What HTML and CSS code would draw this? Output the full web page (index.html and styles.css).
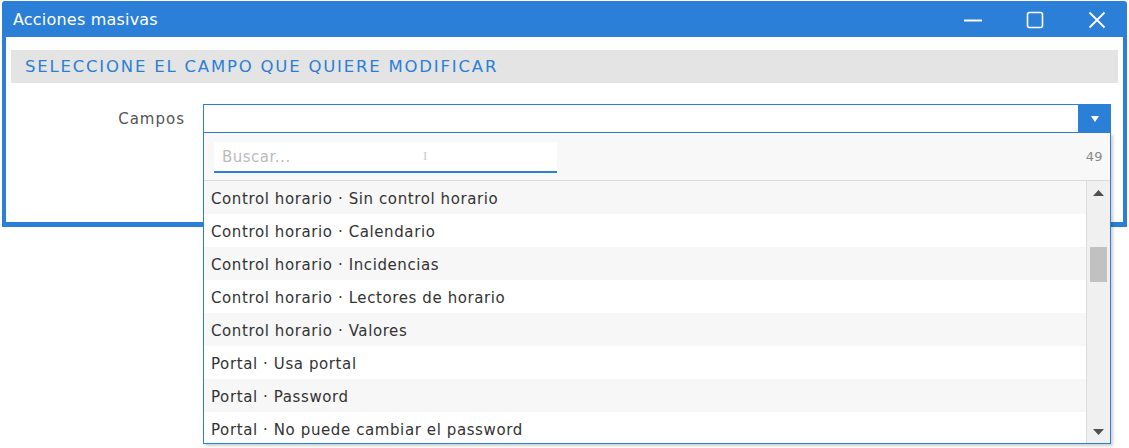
FILE: index.html
```html
<!DOCTYPE html>
<html lang="es">
<head>
<meta charset="utf-8">
<title>Acciones masivas</title>
<link rel="stylesheet" href="styles.css">
</head>
<body>
<div class="window">
  <div class="titlebar">
    <span class="title">Acciones masivas</span>
    <div class="controls">
      <svg class="ctl" width="20" height="20" viewBox="0 0 20 20"><path d="M1 10.5h18" stroke="#fff" stroke-width="2"/></svg>
      <svg class="ctl" width="20" height="20" viewBox="0 0 20 20"><rect x="2.5" y="2.5" width="15" height="15" rx="2" fill="none" stroke="#fff" stroke-width="1.6"/></svg>
      <svg class="ctl" width="20" height="20" viewBox="0 0 20 20"><path d="M2.5 2.5l15 15M17.5 2.5l-15 15" stroke="#fff" stroke-width="1.8"/></svg>
    </div>
  </div>
  <div class="body">
    <div class="section">SELECCIONE EL CAMPO QUE QUIERE MODIFICAR</div>
    <div class="field">
      <label class="label">Campos</label>
      <div class="select">
        <div class="select-box">
          <div class="select-value"></div>
          <div class="select-btn"><svg width="10" height="8" viewBox="0 0 10 8"><path d="M1 1h8L5 7z" fill="#fff"/></svg></div>
        </div>
        <div class="dropdown">
          <div class="search-row">
            <div class="search"><span class="placeholder">Buscar...</span><span class="cursor">I</span></div>
            <span class="count">49</span>
          </div>
          <div class="list-wrap">
            <ul class="list">
              <li class="alt">Control horario · Sin control horario</li>
              <li>Control horario · Calendario</li>
              <li class="alt">Control horario · Incidencias</li>
              <li>Control horario · Lectores de horario</li>
              <li class="alt">Control horario · Valores</li>
              <li>Portal · Usa portal</li>
              <li class="alt">Portal · Password</li>
              <li>Portal · No puede cambiar el password</li>
            </ul>
            <div class="scrollbar">
              <svg class="arrow" width="11" height="6" viewBox="0 0 11 6"><path d="M0 6h11L5.5 0z" fill="#505050"/></svg>
              <div class="track"><div class="thumb"></div></div>
              <svg class="arrow" width="11" height="6" viewBox="0 0 11 6"><path d="M0 0h11L5.5 6z" fill="#505050"/></svg>
            </div>
          </div>
        </div>
      </div>
    </div>
  </div>
</div>
</body>
</html>
```
FILE: styles.css
```css
* { box-sizing: border-box; }
html, body { margin: 0; padding: 0; background: #fff; }
body {
  font-family: "DejaVu Sans", sans-serif;
  padding: 1px 2px 0 2px;
  height: 448px;
  overflow: hidden;
}
.window {
  width: 1125px;
  border-radius: 3px 3px 0 0;
  background: #2b7fd6;
  padding: 0 4px 5px 4px;
}
.titlebar {
  height: 36px;
  display: flex;
  align-items: center;
  justify-content: space-between;
  padding: 0 0 0 7px;
  margin: 0 -4px;
  padding-left: 11px;
  color: #fff;
}
.title { font-size: 16px; letter-spacing: 0.2px; padding-top: 1px; }
.controls { display: flex; gap: 42px; padding-right: 20px; padding-top: 2px; }
.ctl { display: block; }
.body {
  background: #fff;
  padding: 13px 5px 89px 5px;
}
.section {
  height: 33px;
  background: #e4e4e4;
  color: #2b7fd6;
  font-size: 16.5px;
  font-weight: 500;
  letter-spacing: 1.8px;
  display: flex;
  align-items: center;
  padding-left: 14px;
}
.field {
  display: flex;
  align-items: center;
  margin-top: 21px;
  height: 29px;
}
.label {
  width: 174px;
  text-align: right;
  color: #555;
  font-size: 15px;
  letter-spacing: 1px;
  margin-right: 18px;
}
.select { position: relative; width: 908px; }
.select-box {
  height: 29px;
  display: flex;
  border: 1px solid #2b7fd6;
  background: #fff;
}
.select-value { flex: 1; }
.select-btn {
  width: 33px;
  margin: -1px -1px -1px 0;
  background: #2b7fd6;
  display: flex;
  align-items: center;
  justify-content: center;
}
.dropdown {
  position: absolute;
  top: 100%;
  left: 0;
  width: 908px;
  height: 311px;
  background: #f8f8f8;
  border: 1px solid #2b7fd6;
  border-top: none;
  box-shadow: 2px 2px 3px rgba(0,0,0,0.2);
  display: flex;
  flex-direction: column;
}
.search-row {
  height: 48px;
  display: flex;
  align-items: center;
  justify-content: space-between;
  padding: 0 7px 0 10px;
  border-bottom: 1px solid #dadada;
}
.search {
  width: 343px;
  height: 31px;
  background: #fff;
  border-bottom: 2px solid #2b7fd6;
  display: flex;
  align-items: center;
  padding-left: 8px;
  position: relative;
  margin-top: 2px;
}
.placeholder { color: #bbb; font-size: 15px; letter-spacing: 0.5px; }
.cursor {
  position: absolute;
  left: 209px;
  top: 6px;
  color: #ccc;
  font-size: 13px;
  font-family: "Liberation Serif", serif;
}
.count { color: #888; font-size: 13px; letter-spacing: 0.4px; }
.list-wrap { flex: 1; display: flex; overflow: hidden; }
.list {
  list-style: none;
  margin: 0;
  padding: 0;
  flex: 1;
  overflow: hidden;
  border-right: 1px solid #dcdcdc;
}
.list li {
  height: 33px;
  display: flex;
  align-items: center;
  padding: 2px 0 0 7px;
  font-size: 15px;
  letter-spacing: 0.6px;
  color: #333;
  background: #fff;
}
.list li.alt { background: #f7f7f7; }
.scrollbar {
  width: 23px;
  background: #f0f0f0;
  display: flex;
  flex-direction: column;
  align-items: center;
  padding: 9px 0 8px;
}
.arrow { display: block; flex: none; }
.track { flex: 1; width: 100%; padding: 51px 3px 0 3px; }
.thumb { height: 35px; background: #c1c1c1; }
```
